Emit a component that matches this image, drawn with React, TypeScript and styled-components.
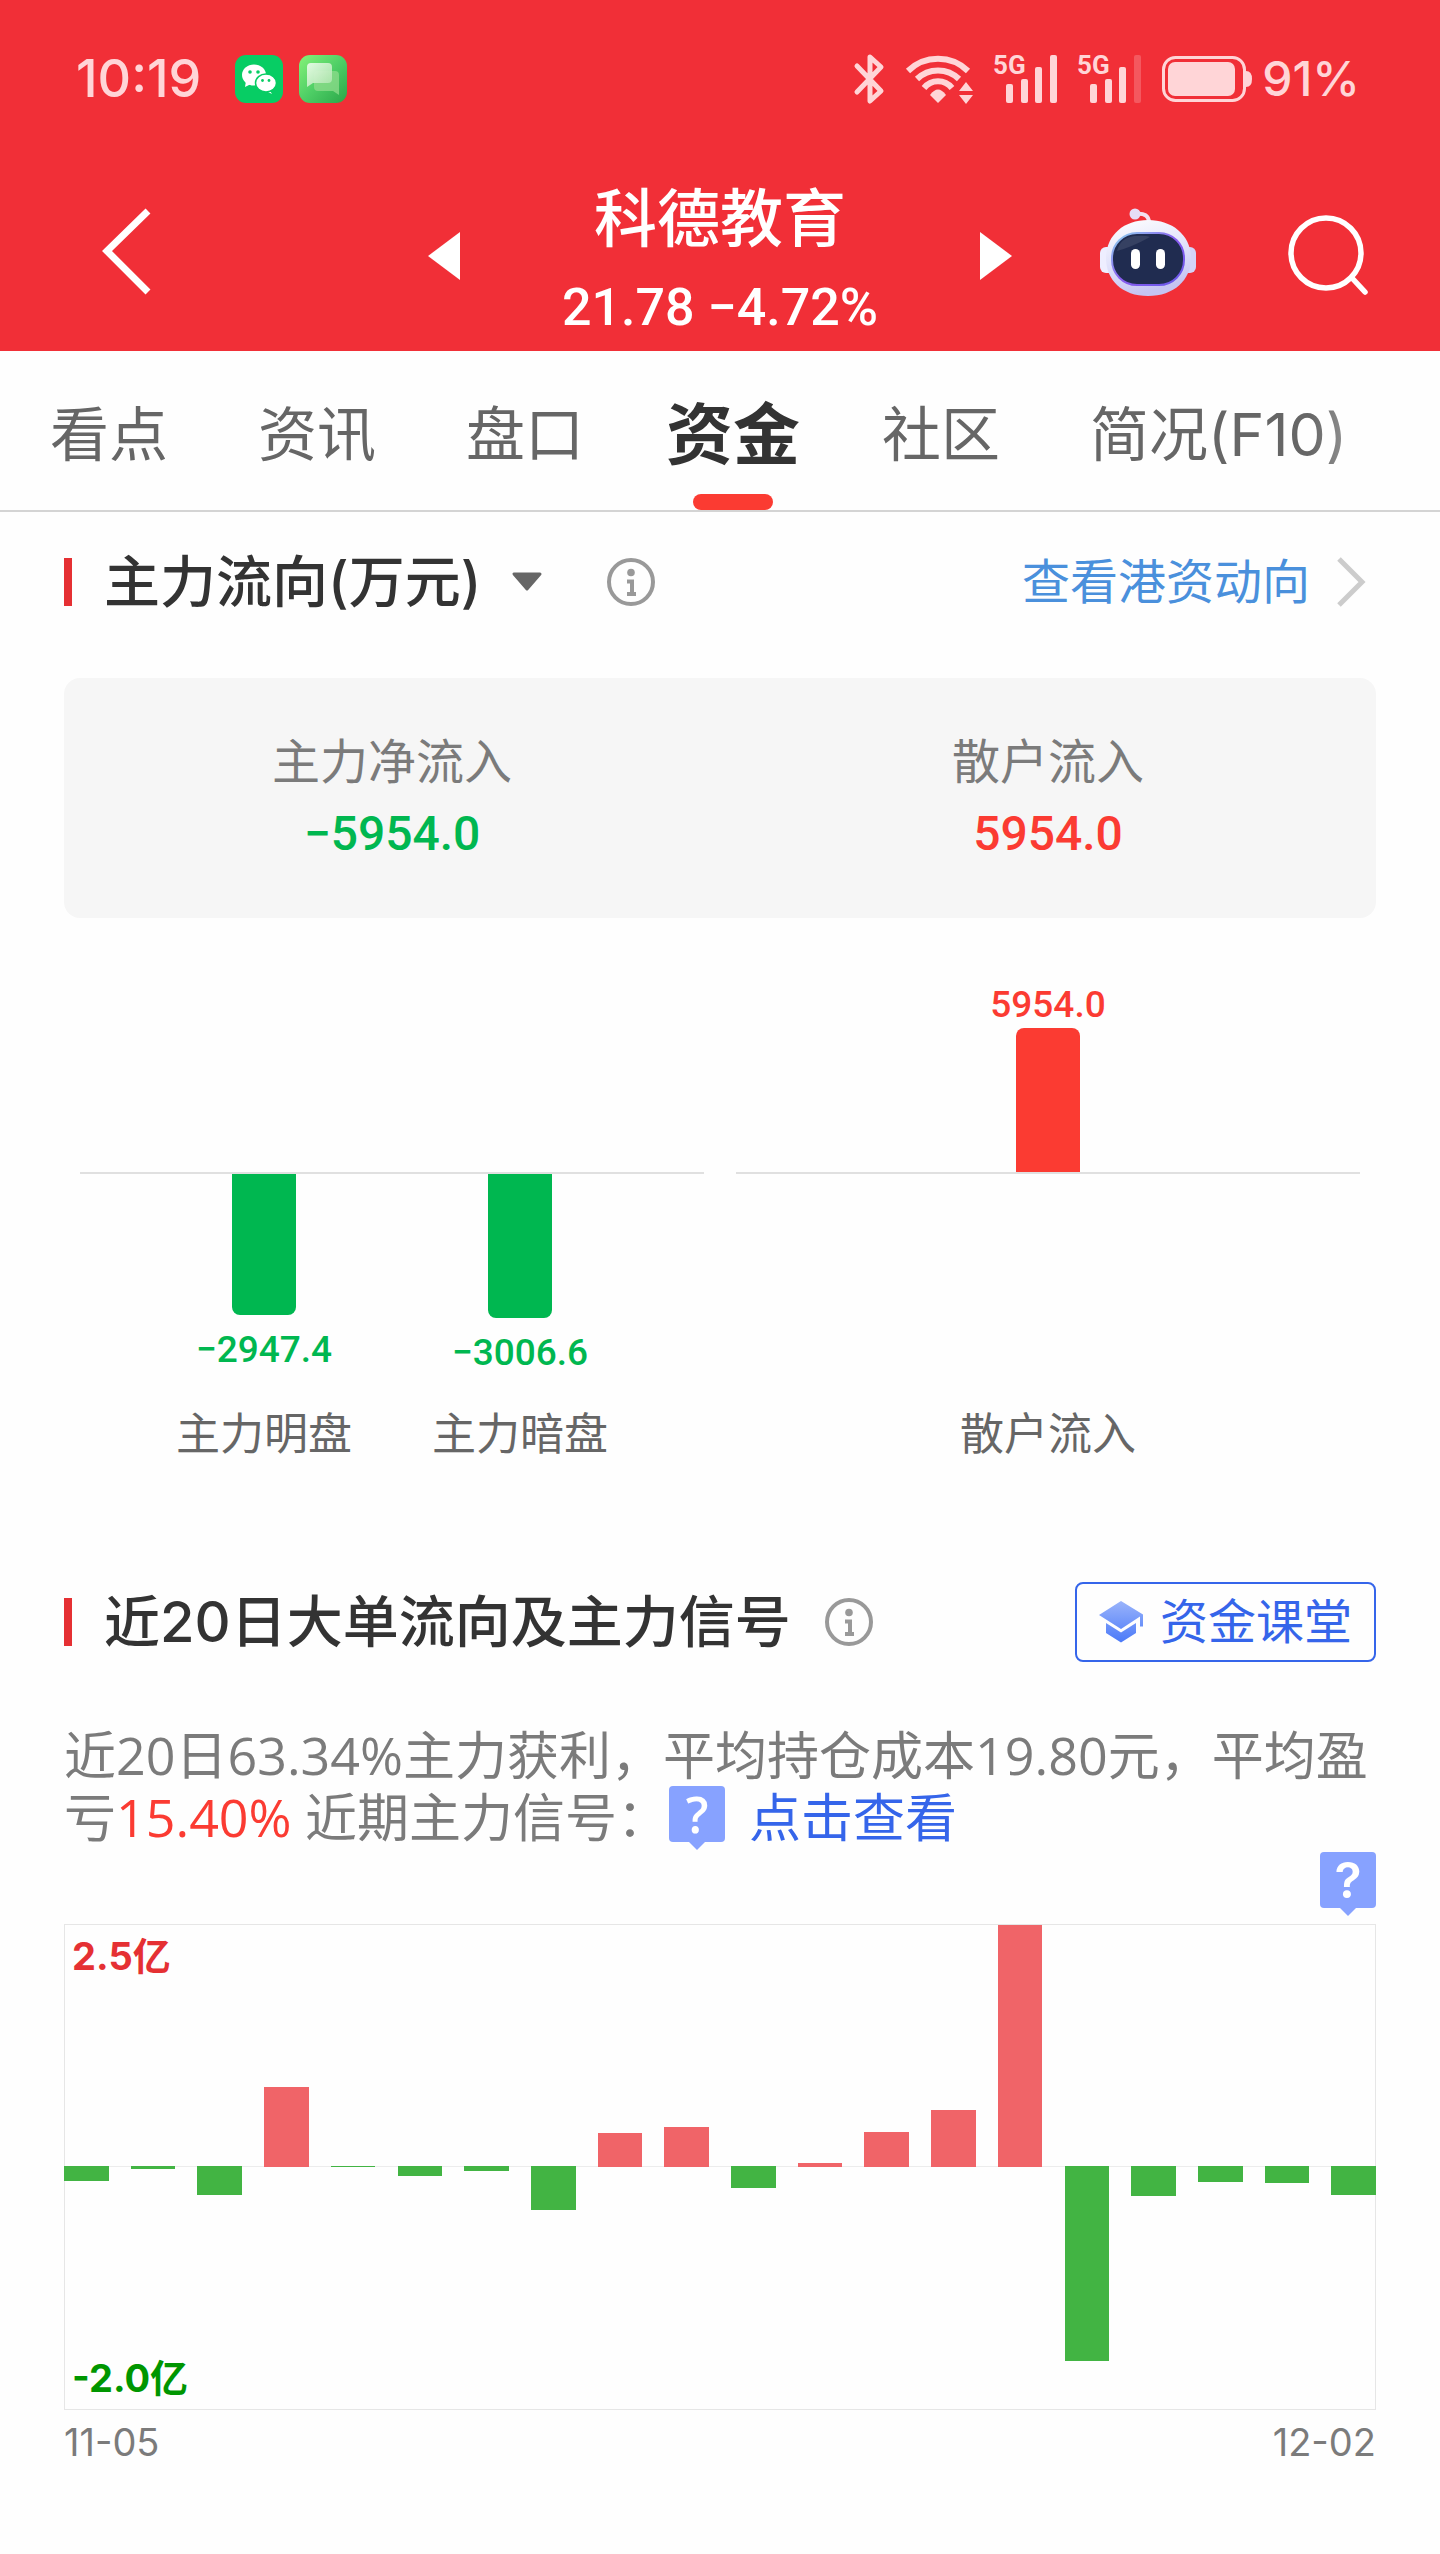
import React from "react";
import styled, { createGlobalStyle, css } from "styled-components";

const color = {
  brand: "#f12f37",
  pale: "#ffd5d7",
  up: "#fb3b32",
  down: "#00b750",
  mark: "#e53033",
  ink: "#333333",
  mid: "#666666",
  soft: "#7b7b7b",
  line: "#e0e0e0",
  link: "#4a90dc",
  blue: "#3565ea",
  tip: "#87a2ff",
};

const GlobalStyle = createGlobalStyle`
  *, *::before, *::after { box-sizing: border-box; }
  body {
    margin: 0;
    background: #fefefe;
    color: ${color.ink};
    font-family: Inter, "Noto Sans CJK SC", sans-serif;
  }
  button {
    margin: 0;
    padding: 0;
    border: 0;
    background: none;
    color: inherit;
    font: inherit;
    cursor: pointer;
  }
  h1, h2, p { margin: 0; font: inherit; }
  a { color: inherit; text-decoration: none; }
  svg { display: block; flex: none; overflow: visible; }
`;

const numeric = css`
  font-family: Roboto, "Noto Sans CJK SC", sans-serif;
  font-weight: 500;
`;

/* ---------- top area ---------- */

const Top = styled.header`
  background: ${color.brand};
  color: #fff;
`;

const StatusBar = styled.div`
  display: flex;
  align-items: center;
  justify-content: space-between;
  height: 158px;
  padding: 0 80px 0 76px;
  color: ${color.pale};
`;

const StatusGroup = styled.div<{ $gap: number }>`
  display: flex;
  align-items: center;
  gap: ${(p) => p.$gap}px;
`;

const Clock = styled.span`
  margin-right: 18px;
  font-size: 52px;
  line-height: 64px;
  font-weight: 500;
`;

const Percent = styled.span`
  font-size: 48px;
  line-height: 64px;
  font-weight: 500;
`;

const NavBar = styled.div`
  display: grid;
  grid-template-columns: 1fr auto 1fr;
  align-items: center;
  height: 193px;
  padding: 0 72px;
`;

const BackButton = styled.button`
  padding: 0 30px;
`;

const StockSwitch = styled.div`
  display: flex;
  align-items: center;
  justify-content: space-between;
  width: 584px;
`;

const StockTitle = styled.div`
  padding-top: 16px;
  text-align: center;
`;

const StockName = styled.h1`
  font-size: 63px;
  line-height: 88px;
  font-weight: 500;
`;

const StockPrice = styled.p`
  ${numeric}
  font-size: 52px;
  line-height: 92px;
`;

const NavActions = styled.div`
  display: flex;
  align-items: center;
  justify-content: flex-end;
  gap: 92px;
`;

/* ---------- tabs ---------- */

const Tabs = styled.nav`
  position: relative;
  display: flex;
  gap: 90px;
  height: 161px;
  padding: 0 50px;
  border-bottom: 2px solid #d4d4d4;
  overflow: hidden;

  &::after {
    content: "";
    position: absolute;
    inset: 0 0 0 auto;
    width: 130px;
    background: linear-gradient(to right, rgba(254, 254, 254, 0), #fefefe);
    pointer-events: none;
  }
`;

const Tab = styled.button<{ $active?: boolean }>`
  display: flex;
  flex-direction: column;
  align-items: center;
  justify-content: space-between;
  flex: none;
  padding-top: 36px;
  color: ${color.mid};
  font-size: 59px;
  line-height: 96px;
  white-space: nowrap;
  ${(p) =>
    p.$active &&
    css`
      margin: 0 -8px;
      color: ${color.ink};
      font-size: 67px;
      font-weight: 700;
    `}
`;

const TabMark = styled.span`
  width: 80px;
  height: 16px;
  border-radius: 8px;
  background: ${color.up};
`;

/* ---------- sections ---------- */

const Section = styled.section`
  padding: 0 64px;
`;

const SectionHead = styled.div`
  display: flex;
  align-items: center;
  justify-content: space-between;
  height: 140px;
`;

const HeadLeft = styled.div<{ $gap: number }>`
  display: flex;
  align-items: center;
  gap: ${(p) => p.$gap}px;
`;

const HeadTitle = styled.h2`
  display: flex;
  align-items: center;
  gap: 32px;
  font-size: 56px;
  line-height: 80px;
  font-weight: 500;

  &::before {
    content: "";
    width: 8px;
    height: 48px;
    background: ${color.mark};
  }
`;

const TitleButton = styled.button`
  display: flex;
  align-items: center;
  gap: 30px;
`;

const MoreLink = styled.a`
  display: flex;
  align-items: center;
  gap: 26px;
  padding-right: 10px;
  color: ${color.link};
  font-size: 48px;
  line-height: 72px;
`;

const Summary = styled.div`
  display: grid;
  grid-template-columns: 1fr 1fr;
  margin-top: 26px;
  padding: 48px 0;
  border-radius: 16px;
  background: #f6f6f6;
  text-align: center;
`;

const SummaryLabel = styled.p`
  color: ${color.soft};
  font-size: 48px;
  line-height: 72px;
`;

const SummaryValue = styled.p<{ $up: boolean }>`
  ${numeric}
  color: ${(p) => (p.$up ? color.up : color.down)};
  font-size: 48px;
  line-height: 72px;
`;

/* ---------- flow bars ---------- */

const FlowChart = styled.div`
  display: grid;
  grid-template-columns: 1fr 1fr;
  gap: 32px;
  padding: 0 16px;
`;

const FlowGroup = styled.div<{ $columns: number }>`
  display: grid;
  grid-template-columns: 1fr repeat(${(p) => p.$columns}, 256px) 1fr;
  grid-template-rows: 254px 2px 228px 60px;
`;

const FlowAxis = styled.div`
  grid-row: 2;
  grid-column: 1 / -1;
  background: ${color.line};
`;

const FlowItem = styled.div<{ $up: boolean; $column: number }>`
  grid-row: ${(p) => (p.$up ? 1 : 3)};
  grid-column: ${(p) => p.$column};
  display: flex;
  flex-direction: ${(p) => (p.$up ? "column-reverse" : "column")};
  align-items: center;
  gap: ${(p) => (p.$up ? 0 : 12)}px;
  color: ${(p) => (p.$up ? color.up : color.down)};
`;

const FlowBar = styled.div<{ $up: boolean }>`
  width: 64px;
  border-radius: ${(p) => (p.$up ? "8px 8px 0 0" : "0 0 8px 8px")};
  background: currentColor;
`;

const FlowValue = styled.span`
  ${numeric}
  font-size: 37px;
  line-height: 46px;
`;

const FlowLabel = styled.span<{ $column: number }>`
  grid-row: 4;
  grid-column: ${(p) => p.$column};
  color: ${color.mid};
  font-size: 44px;
  line-height: 64px;
  text-align: center;
`;

/* ---------- 20-day section ---------- */

const SignalSection = styled(Section)`
  padding-top: 90px;
`;

const ClassButton = styled.button`
  display: flex;
  align-items: center;
  gap: 17px;
  height: 80px;
  padding: 0 22px;
  border: 2px solid ${color.blue};
  border-radius: 8px;
  color: ${color.blue};
  font-size: 48px;
  line-height: 72px;
`;

const Brief = styled.p`
  margin-top: 32px;
  color: ${color.soft};
  font-family: "Open Sans", "Noto Sans CJK SC", sans-serif;
  font-size: 52px;
  line-height: 62px;
`;

const Gain = styled.span`
  color: ${color.up};
`;

const BriefLink = styled.a`
  margin-left: 24px;
  color: ${color.blue};
`;

const Tip = styled.button<{ $inline?: boolean }>`
  position: relative;
  display: inline-block;
  width: 56px;
  height: 56px;
  border-radius: 4px;
  background: ${color.tip};
  color: #fff;
  font-size: 50px;
  line-height: 56px;
  font-weight: 600;
  vertical-align: top;
  margin-bottom: ${(p) => (p.$inline ? 0 : 8)}px;

  &::after {
    content: "";
    position: absolute;
    top: 100%;
    left: 20px;
    border: solid transparent;
    border-width: 8px 8px 0;
    border-top-color: ${color.tip};
  }
`;

const TipRow = styled.div`
  display: flex;
  justify-content: flex-end;
  padding: 4px 0 8px;
`;

const DayChart = styled.div`
  position: relative;
  display: flex;
  justify-content: space-between;
  height: 486px;
  background: linear-gradient(#ececec, #ececec) 0 242px / 100% 1px no-repeat;
  box-shadow: inset 0 0 0 1px #e6e6e6;
`;

const DayBar = styled.div<{ $up: boolean }>`
  position: relative;
  align-self: ${(p) => (p.$up ? "flex-end" : "flex-start")};
  width: 3.4%;
  margin: ${(p) => (p.$up ? "0 0 243px" : "242px 0 0")};
  background: ${(p) => (p.$up ? "#f06468" : "#42b443")};
`;

const Scale = styled.span<{ $up: boolean }>`
  position: absolute;
  left: 8px;
  ${(p) => (p.$up ? "top: 4px" : "bottom: 4px")};
  color: ${(p) => (p.$up ? color.mark : "#009600")};
  font-size: 38px;
  line-height: 56px;
  font-weight: 700;
`;

const Dates = styled.div`
  display: flex;
  justify-content: space-between;
  color: ${color.soft};
  font-size: 38px;
  line-height: 64px;
`;

/* ---------- drawings ---------- */

const WeChatIcon = () => (
  <svg width="48" height="48" viewBox="0 0 48 48" aria-hidden="true">
    <rect width="48" height="48" rx="11" fill="#07cd64" />
    <path d="M11 26l-1 6 6-3z" fill="#fff" />
    <ellipse cx="19" cy="20" rx="12" ry="10.5" fill="#fff" />
    <path d="M34 34l3 5-6-3z" fill="#fff" />
    <ellipse cx="31" cy="28" rx="10.5" ry="9" fill="#fff" stroke="#07cd64" strokeWidth="1.5" />
    <g fill="#07cd64">
      <circle cx="15" cy="17" r="1.8" />
      <circle cx="23" cy="17" r="1.8" />
      <circle cx="27.5" cy="25.5" r="1.4" />
      <circle cx="34" cy="25.5" r="1.4" />
    </g>
  </svg>
);

const MessageIcon = () => (
  <svg width="48" height="48" viewBox="0 0 48 48" aria-hidden="true">
    <defs>
      <linearGradient id="msg" x1="0" y1="0" x2="1" y2="1">
        <stop offset="0" stopColor="#86f278" />
        <stop offset="0.5" stopColor="#4fcf66" />
        <stop offset="1" stopColor="#2aa648" />
      </linearGradient>
      <linearGradient id="bubble" x1="0" y1="0" x2="1" y2="1">
        <stop offset="0" stopColor="#f0fdee" />
        <stop offset="1" stopColor="#a9e3a8" />
      </linearGradient>
    </defs>
    <rect width="48" height="48" rx="11" fill="url(#msg)" />
    <path d="M19 16h17a4 4 0 0 1 4 4v20l-6-4H19a4 4 0 0 1-4-4V20a4 4 0 0 1 4-4z" fill="#8fdc8c" opacity="0.75" />
    <path d="M12 8h17a4 4 0 0 1 4 4v12a4 4 0 0 1-4 4H14l-6 4V12a4 4 0 0 1 4-4z" fill="url(#bubble)" opacity="0.9" />
  </svg>
);

const BluetoothIcon = () => (
  <svg width="30" height="50" viewBox="0 0 30 50" fill="none" stroke="currentColor" strokeWidth="5" strokeLinecap="round" strokeLinejoin="round" aria-hidden="true">
    <path d="M3 12l24 25-11 10V3l11 10L3 38" />
  </svg>
);

const WifiIcon = () => (
  <svg width="68" height="50" viewBox="0 0 68 50" aria-hidden="true">
    <g fill="none" stroke="currentColor" strokeWidth="6">
      <path d="M3 17A43 43 0 0 1 63 17" />
      <path d="M12 25A30 30 0 0 1 54 25" />
      <path d="M19 34A18 18 0 0 1 47 34" />
    </g>
    <path d="M25 41Q33 30 41 41L33 49z" fill="currentColor" />
    <path d="M61 28l7 9H54zM61 50l7-9H54z" fill="currentColor" />
  </svg>
);

const SignalText = styled.text`
  font-family: Roboto, sans-serif;
  font-size: 26px;
  font-weight: 700;
`;

const SignalIcon = ({ weak = false }: { weak?: boolean }) => (
  <svg width="63" height="50" viewBox="0 0 63 50" fill="currentColor" aria-hidden="true">
    <SignalText x="-1" y="20">5G</SignalText>
    <rect x="12" y="30" width="7" height="19" rx="2" />
    <rect x="27" y="25" width="7" height="24" rx="2" />
    <rect x="41" y="13" width="7" height="36" rx="2" />
    <rect x="56" y="1" width="7" height="48" rx="2" opacity={weak ? 0.25 : 1} />
  </svg>
);

const BatteryIcon = () => (
  <svg width="90" height="46" viewBox="0 0 90 46" aria-hidden="true">
    <rect x="1.5" y="1.5" width="81" height="43" rx="12" fill="none" stroke="currentColor" strokeWidth="3" />
    <rect x="6" y="6" width="67" height="34" rx="7" fill="currentColor" />
    <path d="M84 15q6 0 6 8t-6 8z" fill="currentColor" />
  </svg>
);

const BackIcon = () => (
  <svg width="50" height="88" viewBox="0 0 50 88" fill="none" stroke="currentColor" strokeWidth="7" aria-hidden="true">
    <path d="M46 1L5 41l41 41" />
  </svg>
);

const Triangle = ({ right = false }: { right?: boolean }) => (
  <svg width="32" height="48" viewBox="0 0 32 48" fill="currentColor" aria-hidden="true">
    <path d={right ? "M0 0l32 24L0 48z" : "M32 0L0 24l32 24z"} />
  </svg>
);

const RobotIcon = () => (
  <svg width="96" height="96" viewBox="0 0 96 96" aria-hidden="true">
    <defs>
      <linearGradient id="shell" x1="0" y1="0" x2="0.3" y2="1">
        <stop offset="0" stopColor="#ffffff" />
        <stop offset="0.6" stopColor="#dfe0fa" />
        <stop offset="1" stopColor="#c5c4f2" />
      </linearGradient>
      <linearGradient id="rim" x1="0" y1="0" x2="1" y2="1">
        <stop offset="0" stopColor="#8fd8ee" />
        <stop offset="0.5" stopColor="#8a5cf0" />
        <stop offset="1" stopColor="#6557e8" />
      </linearGradient>
    </defs>
    <path d="M35 6q14-2 14 9" fill="none" stroke="#f3dff0" strokeWidth="4" />
    <circle cx="35" cy="6" r="5.5" fill="#e6dcf6" />
    <rect x="0" y="39" width="16" height="26" rx="6" fill="#eeeeff" />
    <rect x="80" y="39" width="16" height="26" rx="6" fill="#d4d3f8" />
    <path d="M48 12c25 0 43 16 43 38S74 88 48 88 6 72 6 50s17-38 42-38z" fill="url(#shell)" />
    <rect x="12" y="25" width="72" height="52" rx="25" fill="#202c50" stroke="url(#rim)" strokeWidth="2" />
    <path d="M17 43q3-13 17-15 12-1 16 1-18 10-33 14z" fill="#4b5674" opacity="0.5" />
    <rect x="31" y="41" width="9" height="20" rx="4.5" fill="#fff" />
    <rect x="56" y="41" width="9" height="20" rx="4.5" fill="#fff" />
  </svg>
);

const SearchIcon = () => (
  <svg width="80" height="80" viewBox="0 0 80 80" fill="none" stroke="currentColor" strokeWidth="5.5" strokeLinecap="round" aria-hidden="true">
    <circle cx="38" cy="37" r="35" />
    <path d="M64 62l13 14" />
  </svg>
);

const DropIcon = () => (
  <svg width="32" height="20" viewBox="0 0 32 20" aria-hidden="true">
    <path d="M3 2h26L16 17z" fill="#666" stroke="#666" strokeWidth="3" strokeLinejoin="round" />
  </svg>
);

const InfoIcon = () => (
  <svg width="48" height="48" viewBox="0 0 48 48" aria-hidden="true">
    <circle cx="24" cy="24" r="22" fill="none" stroke="#999" strokeWidth="4" />
    <circle cx="24" cy="14.5" r="3.8" fill="#999" />
    <path d="M20 23.500h5v12M20 36h9" fill="none" stroke="#999" strokeWidth="4" />
  </svg>
);

const MoreIcon = () => (
  <svg width="30" height="50" viewBox="0 0 30 50" fill="none" stroke="#ccc" strokeWidth="5" aria-hidden="true">
    <path d="M3 2l23 23L3 48" />
  </svg>
);

const CapIcon = () => (
  <svg width="44" height="42" viewBox="0 0 44 42" aria-hidden="true">
    <defs>
      <linearGradient id="cap" x1="0" y1="0" x2="0" y2="42" gradientUnits="userSpaceOnUse">
        <stop offset="0" stopColor="#9ab4fb" />
        <stop offset="1" stopColor="#4a79f8" />
      </linearGradient>
    </defs>
    <path d="M22 0l22 13.500v12h-3v-10L22 28 0 14z" fill="url(#cap)" />
    <path d="M7 22l15 9.500L37 22v10l-15 9.500L7 32z" fill="url(#cap)" />
  </svg>
);

/* ---------- data ---------- */

type Flow = { label: string; value: string; up: boolean; size: number };

const mainFlows: Flow[] = [
  { label: "主力明盘", value: "−2947.4", up: false, size: 141 },
  { label: "主力暗盘", value: "−3006.6", up: false, size: 144 },
];
const retailFlows: Flow[] = [{ label: "散户流入", value: "5954.0", up: true, size: 144 }];

const days = [-15, -3, -29, 80, -1, -10, -5, -44, 34, 40, -22, 4, 35, 57, 242, -195, -30, -16, -17, -29];

const tabs = ["看点", "资讯", "盘口", "资金", "社区", "简况(F10)"];

const FlowPanel = ({ flows }: { flows: Flow[] }) => (
  <FlowGroup $columns={flows.length}>
    <FlowAxis />
    {flows.map((f, i) => (
      <React.Fragment key={f.label}>
        <FlowItem $up={f.up} $column={i + 2}>
          <FlowBar $up={f.up} style={{ height: f.size }} />
          <FlowValue>{f.value}</FlowValue>
        </FlowItem>
        <FlowLabel $column={i + 2}>{f.label}</FlowLabel>
      </React.Fragment>
    ))}
  </FlowGroup>
);

export default function App() {
  return (
    <>
      <GlobalStyle />
      <Top>
        <StatusBar>
          <StatusGroup $gap={16}>
            <Clock>10:19</Clock>
            <WeChatIcon />
            <MessageIcon />
          </StatusGroup>
          <StatusGroup $gap={10}>
            <StatusGroup $gap={21}>
              <BluetoothIcon />
              <WifiIcon />
              <SignalIcon />
              <SignalIcon weak />
              <BatteryIcon />
            </StatusGroup>
            <Percent>91%</Percent>
          </StatusGroup>
        </StatusBar>
        <NavBar>
          <div>
            <BackButton aria-label="返回"><BackIcon /></BackButton>
          </div>
          <StockSwitch>
            <button aria-label="上一只"><Triangle /></button>
            <StockTitle>
              <StockName>科德教育</StockName>
              <StockPrice>21.78 −4.72%</StockPrice>
            </StockTitle>
            <button aria-label="下一只"><Triangle right /></button>
          </StockSwitch>
          <NavActions>
            <button aria-label="智能助手"><RobotIcon /></button>
            <button aria-label="搜索"><SearchIcon /></button>
          </NavActions>
        </NavBar>
      </Top>

      <Tabs>
        {tabs.map((t) => (
          <Tab key={t} $active={t === "资金"}>
            {t}
            {t === "资金" && <TabMark />}
          </Tab>
        ))}
      </Tabs>

      <main>
        <Section>
          <SectionHead>
            <HeadLeft $gap={64}>
              <HeadTitle>
                <TitleButton>
                  主力流向(万元)
                  <DropIcon />
                </TitleButton>
              </HeadTitle>
              <button aria-label="主力流向说明"><InfoIcon /></button>
            </HeadLeft>
            <MoreLink href="#hk">
              查看港资动向
              <MoreIcon />
            </MoreLink>
          </SectionHead>

          <Summary>
            <div>
              <SummaryLabel>主力净流入</SummaryLabel>
              <SummaryValue $up={false}>−5954.0</SummaryValue>
            </div>
            <div>
              <SummaryLabel>散户流入</SummaryLabel>
              <SummaryValue $up>5954.0</SummaryValue>
            </div>
          </Summary>

          <FlowChart>
            <FlowPanel flows={mainFlows} />
            <FlowPanel flows={retailFlows} />
          </FlowChart>
        </Section>

        <SignalSection>
          <SectionHead>
            <HeadLeft $gap={34}>
              <HeadTitle>近20日大单流向及主力信号</HeadTitle>
              <button aria-label="主力信号说明"><InfoIcon /></button>
            </HeadLeft>
            <ClassButton>
              <CapIcon />
              资金课堂
            </ClassButton>
          </SectionHead>

          <Brief>
            近20日63.34%主力获利，平均持仓成本19.80元，平均盈亏<Gain>15.40%</Gain> 近期主力信号：
            <Tip $inline>?</Tip>
            <BriefLink href="#signal">点击查看</BriefLink>
          </Brief>

          <TipRow>
            <Tip>?</Tip>
          </TipRow>
          <DayChart>
            {days.map((d, i) => (
              <DayBar key={i} $up={d > 0} style={{ height: Math.abs(d) }} />
            ))}
            <Scale $up>2.5亿</Scale>
            <Scale $up={false}>-2.0亿</Scale>
          </DayChart>
          <Dates>
            <span>11-05</span>
            <span>12-02</span>
          </Dates>
        </SignalSection>
      </main>
    </>
  );
}
